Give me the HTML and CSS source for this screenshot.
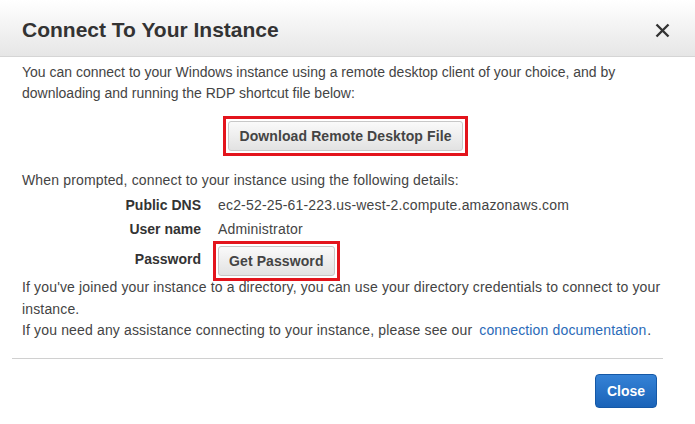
FILE: index.html
```html
<!DOCTYPE html>
<html>
<head>
<meta charset="utf-8">
<link rel="stylesheet" href="styles.css">
</head>
<body>
<div class="dialog">
  <div class="header">
    <h1 class="title">Connect To Your Instance</h1>
    <span class="close-x"><svg width="15" height="15" viewBox="0 0 15 15"><path d="M1.5 1.5 L13.5 13.5 M13.5 1.5 L1.5 13.5" stroke="#333" stroke-width="2.4" fill="none"/></svg></span>
  </div>
  <div class="body">
    <p class="text">You can connect to your Windows instance using a remote desktop client of your choice, and by downloading and running the RDP shortcut file below:</p>
    <div class="center">
      <span class="hl"><button class="btn">Download Remote Desktop File</button></span>
    </div>
    <p class="text prompt">When prompted, connect to your instance using the following details:</p>
    <div class="details">
      <div class="label">Public DNS</div><div class="value">ec2-52-25-61-223.us-west-2.compute.amazonaws.com</div>
      <div class="label">User name</div><div class="value">Administrator</div>
      <div class="label pw">Password</div><div class="value pwv"><span class="hl hl-small"><button class="btn btn-small">Get Password</button></span></div>
    </div>
    <p class="text foot">If you've joined your instance to a directory, you can use your directory credentials to connect to your instance.<br>If you need any assistance connecting to your instance, please see our <a class="link" href="#">connection documentation</a>.</p>
  </div>
  <div class="footer">
    <button class="btn-primary">Close</button>
  </div>
</div>
</body>
</html>
```
FILE: styles.css
```css
html, body {
  margin: 0;
  padding: 0;
  background: #fff;
}
body {
  font-family: Arial, "Liberation Sans", sans-serif;
  color: #444;
  width: 695px;
  height: 424px;
  overflow: hidden;
}
.dialog {
  width: 695px;
}
.header {
  height: 57px;
  box-sizing: border-box;
  border-bottom: 1px solid #d5d5d5;
  background: linear-gradient(to bottom, #ffffff 0%, #e6e6e6 100%);
  display: flex;
  align-items: center;
  justify-content: space-between;
  padding: 0 25px 0 22px;
}
.title {
  margin: 0;
  font-size: 21px;
  font-weight: bold;
  color: #333;
  padding-top: 3px;
}
.close-x {
  display: flex;
  padding-top: 4px;
}
.body {
  padding: 5px 22px 0 22px;
}
.text {
  margin: 0;
  font-size: 14px;
  line-height: 21px;
}
.center {
  display: flex;
  justify-content: center;
  padding: 12px 0 0 0;
  margin-left: -4px;
}
.hl {
  display: inline-flex;
  border: 3px solid #e3141c;
  padding: 2px;
}
.btn {
  font-family: Arial, "Liberation Sans", sans-serif;
  font-weight: bold;
  font-size: 14px;
  color: #444;
  background: linear-gradient(to bottom, #fafafa 0%, #e2e2e2 100%);
  border: 1px solid #c8c8c8;
  border-radius: 3px;
  height: 30px;
  padding: 0 10px;
  letter-spacing: 0.1px;
}
.prompt {
  margin-top: 14px;
  letter-spacing: 0.15px;
}
.details {
  display: grid;
  grid-template-columns: 179px auto;
  column-gap: 17px;
  row-gap: 0;
  font-size: 14px;
  margin-top: 2px;
}
.label {
  text-align: right;
  font-weight: bold;
  color: #333;
  line-height: 24px;
}
.value {
  line-height: 24px;
  letter-spacing: 0.18px;
}
.label.pw {
  padding-top: 6px;
}
.pwv {
  margin-left: -5px;
  display: flex;
  align-items: flex-start;
}
.hl-small {
  margin-bottom: -5px;
}
.btn-small {
  height: 30px;
  padding: 0 10px;
  letter-spacing: 0.1px;
}
.foot {
  margin-top: 1px;
  line-height: 21.5px;
  letter-spacing: 0.15px;
}
.link {
  color: #2a6ab8;
  text-decoration: none;
  margin-left: 3px;
  margin-right: 1px;
}
.footer {
  margin: 16px 32px 0 12px;
  border-top: 1px solid #d0d0d0;
  display: flex;
  justify-content: flex-end;
  padding-top: 15px;
}
.btn-primary {
  font-family: Arial, "Liberation Sans", sans-serif;
  font-weight: bold;
  font-size: 14px;
  color: #fff;
  background: linear-gradient(to bottom, #3582d6 0%, #1a63b8 100%);
  border: 1px solid #1558a6;
  border-radius: 4px;
  width: 62px;
  height: 34px;
  padding: 0;
  margin-right: 6px;
}
```
